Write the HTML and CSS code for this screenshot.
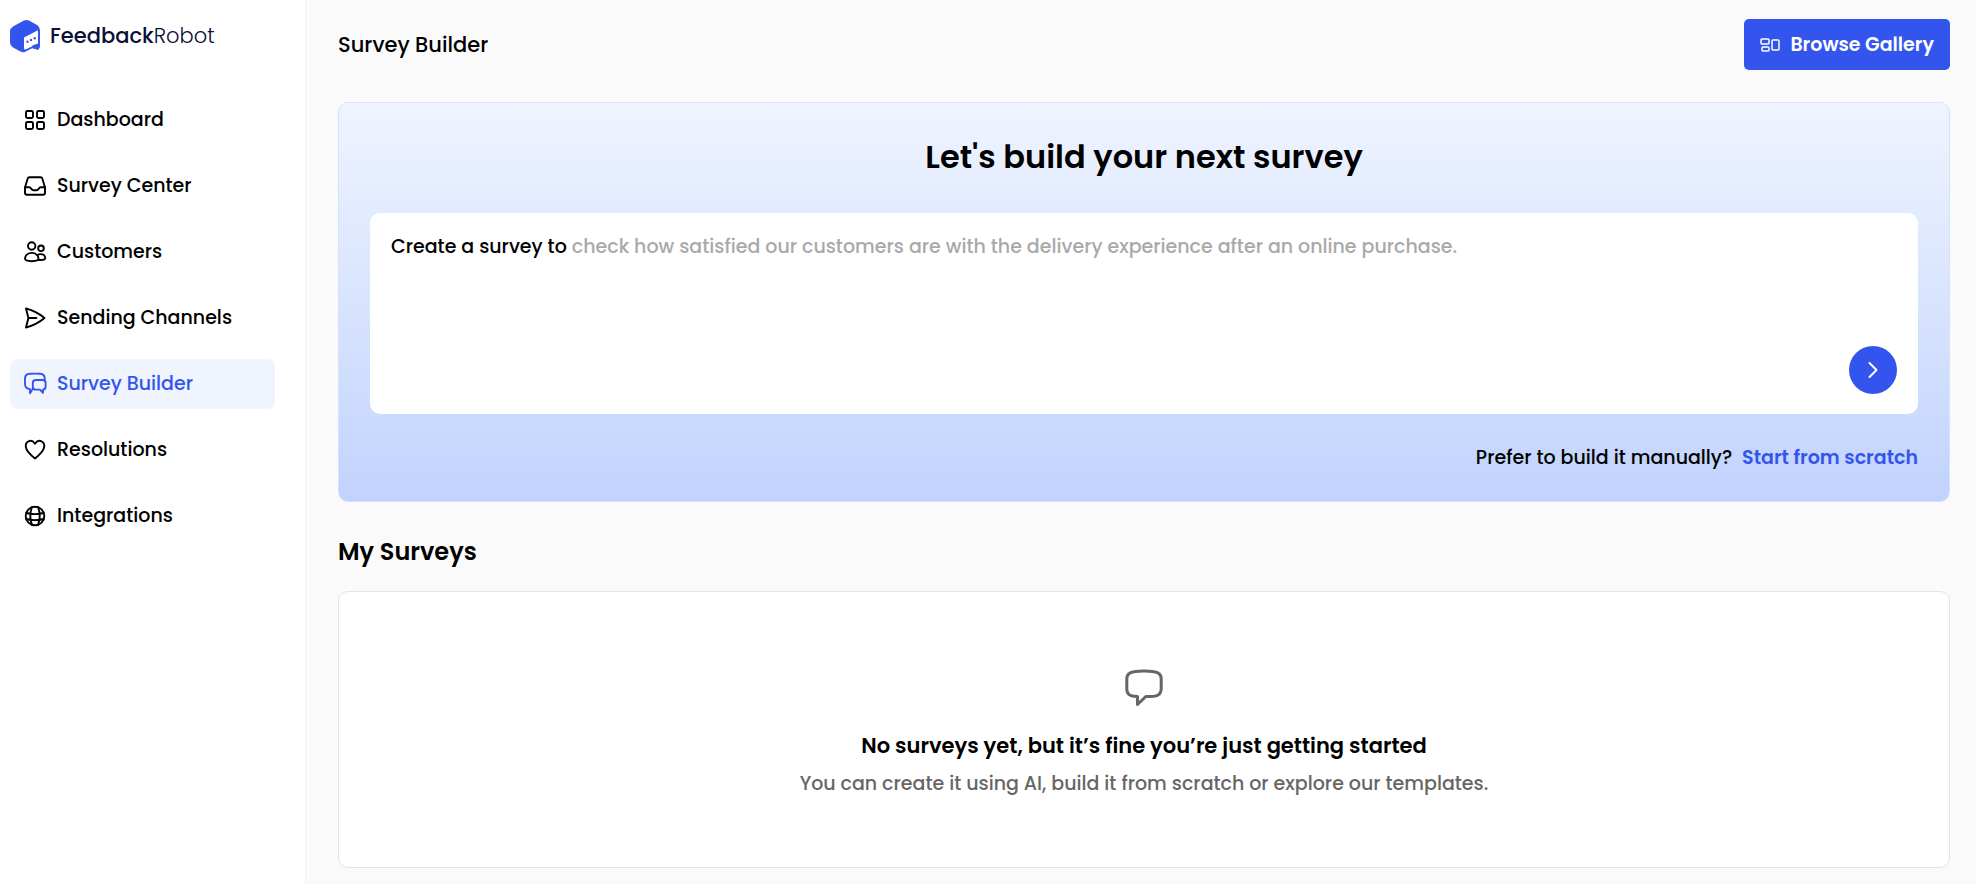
FILE: index.html
```html
<!DOCTYPE html>
<html lang="en">
<head>
    <meta charset="UTF-8">
    <meta name="viewport" content="width=device-width, initial-scale=1.0">
    <title>Survey Builder - FeedbackRobot</title>
    <link rel="stylesheet" href="styles.css">
</head>
<body>
    <aside class="sidebar">
        <a href="#" class="logo">
            <svg width="32" height="34" viewBox="1 0 32 34">
                <path d="M14.500 1.800a6 6 0 0 1 6 0l7.500 4.300a6 6 0 0 1 3 5.100V28l-1.800 3-6-1.800-7 3.600a5 5 0 0 1-4.700-.2L4 28.600a6 6 0 0 1-3-5.100V12.500a6 6 0 0 1 3-5.100z" fill="#3355ee"/>
                <path d="M15 18.500L28 11.700q1-.5 1 .7v11.200q0 1-1 1.500L17 30.200q-2 1-2-1z" fill="#fff"/>
                <path d="M23 26.500l5-1.600v5.100z" fill="#3355ee"/>
                <g fill="#3355ee"><circle cx="18.500" cy="22.700" r="1.200"/><circle cx="22" cy="21" r="1.200"/><circle cx="25.700" cy="19.200" r="1.200"/></g>
            </svg>
            <span class="logo-text"><b>Feedback</b>Robot</span>
        </a>
        <nav>
            <ul>
                <li><a href="#">
                    <svg class="icon" viewBox="0 0 24 24"><rect x="3" y="3" width="7" height="7" rx="1.500"/><rect x="14" y="3" width="7" height="7" rx="1.500"/><rect x="3" y="14" width="7" height="7" rx="1.500"/><rect x="14" y="14" width="7" height="7" rx="1.500"/></svg>
                    Dashboard</a></li>
                <li><a href="#">
                    <svg class="icon" viewBox="0 0 24 24"><path d="M6.500 3.300h11a2 2 0 0 1 1.900 1.500L22 13.500v5.200a2 2 0 0 1-2 2H4a2 2 0 0 1-2-2v-5.200l2.600-8.700a2 2 0 0 1 1.900-1.500z"/><path d="M2 13.300h4.300c2 0 1.900 3 4.200 3h3c2.300 0 2.200-3 4.200-3H22"/></svg>
                    Survey Center</a></li>
                <li><a href="#">
                    <svg class="icon" viewBox="0 0 24 24"><circle cx="8.700" cy="6" r="3.700"/><circle cx="18" cy="8.300" r="2.800"/><path d="M8.800 12.900c-4 0-6.800 2.700-6.800 5.700 0 1.600 2.500 2.600 6.800 2.600s6.700-1 6.700-2.600c0-3-2.700-5.700-6.700-5.700z"/><path d="M14.200 15.200c.9-.7 2.200-1.100 3.500-1.100 2.700 0 4.500 1.800 4.500 3.900 0 1.200-1.700 2-4.500 2h-2.500"/></svg>
                    Customers</a></li>
                <li><a href="#">
                    <svg class="icon" viewBox="0 0 24 24"><path d="M3 2.500C9.500 4.200 16 7.300 21.500 12 16 16.700 9.500 19.800 3 21.500L5.400 12zM5.400 12h8"/></svg>
                    Sending Channels</a></li>
                <li><a href="#" class="active">
                    <svg class="icon" viewBox="0 0 24 24"><path d="M9.800 16.700L7 21.300v-4.200c-3.500-.3-5-1.700-5-5V6.500C2 3 3.700 2 7 1.800c3.300-.2 6.700-.2 10 0 3.300.2 4.700 1.400 4.700 4.700v1.600"/><path d="M13 8h6.300c2.300 0 3.300 1 3.300 3v3.400c0 2-1 3-2.600 3.200v3.200l-3-3.200h-4c-2.200 0-3.200-1-3.200-3.200V11c0-2 1-3 3.200-3z"/></svg>
                    Survey Builder</a></li>
                <li><a href="#">
                    <svg class="icon" viewBox="0 0 24 24"><path d="M12 5.700C10 2.900 7.300 2.300 5.200 3.500 3 4.700 2.400 7.500 3.100 10c1.200 4.300 6 8.200 8.900 10.500 2.900-2.300 7.700-6.200 8.900-10.500.7-2.500.1-5.300-2.100-6.500-2.100-1.200-4.800-.6-6.800 2.200z"/></svg>
                    Resolutions</a></li>
                <li><a href="#">
                    <svg class="icon" viewBox="0 0 24 24"><circle cx="12" cy="12" r="9.300"/><path d="M9 3c-2.300 6-2.300 12 0 18M15 3c2.300 6 2.300 12 0 18M3.300 9c6 1.600 11.400 1.600 17.400 0M3.300 15c6 1.600 11.400 1.600 17.400 0"/></svg>
                    Integrations</a></li>
            </ul>
        </nav>
    </aside>
    <main>
        <header>
            <h1>Survey Builder</h1>
            <button type="button" class="browse">
                <svg width="20" height="16" viewBox="0 0 20 16"><rect x="1" y="2" width="8" height="5" rx="1"/><rect x="2" y="10" width="7" height="4" rx="1"/><rect x="12" y="3" width="7" height="10" rx="1"/></svg>
                Browse Gallery
            </button>
        </header>
        <section class="builder">
            <h2>Let's build your next survey</h2>
            <form class="prompt">
                <label for="survey-prompt">Create a survey to</label>
                <textarea id="survey-prompt" placeholder="check how satisfied our customers are with the delivery experience after an online purchase."></textarea>
                <button type="button" class="next" aria-label="Next">
                    <svg width="24" height="24" viewBox="0 0 24 24"><path d="M8.500 5l7 7-7 7"/></svg>
                </button>
            </form>
            <p class="manual">Prefer to build it manually? <a href="#">Start from scratch</a></p>
        </section>
        <h3>My Surveys</h3>
        <section class="empty">
            <svg width="48" height="48" viewBox="0 0 48 48"><path d="M17.500 34.500c-3 0-5-.2-6.500-.8-2.900-1.100-4.200-3.200-4.200-6.700V17c0-4.500 2.200-6.700 7-7.300 6.800-.8 13.600-.8 20.400 0 4.800.6 7 2.800 7 7.300v10c0 4.500-2.200 6.700-7 7.200-3 .2-6 .3-8.400.3l-8.300 8z"/></svg>
            <h4>No surveys yet, but it’s fine you’re just getting started</h4>
            <p>You can create it using AI, build it from scratch or explore our templates.</p>
        </section>
    </main>
</body>
</html>
```
FILE: styles.css
```css
* {
    box-sizing: border-box;
}

body {
    margin: 0;
    min-height: 100vh;
    display: flex;
    background-color: #fafafa;
    color: #000000;
    font-family: 'Poppins', 'Inter', sans-serif;
    font-size: 19px;
    font-weight: 500;
    line-height: 28px;
}

h1, h2, h3, h4, p, ul {
    margin: 0;
    padding: 0;
}

a {
    color: inherit;
    text-decoration: none;
}

svg {
    flex: none;
    fill: none;
    stroke-linecap: round;
    stroke-linejoin: round;
}

button, textarea {
    font: inherit;
    border: none;
}

button {
    display: flex;
    align-items: center;
    justify-content: center;
    background-color: #3355ee;
    color: #ffffff;
    cursor: pointer;
}

button svg {
    stroke: #ffffff;
    stroke-width: 1.5;
}

/* Sidebar */
.sidebar {
    flex: none;
    width: 306px;
    padding: 18px 30px 0 10px;
    background-color: #ffffff;
    border-right: 1px solid #f3f3f3;
}

.logo {
    display: flex;
    align-items: center;
    gap: 8px;
    height: 36px;
    margin-bottom: 41px;
}

.logo-text {
    color: #0a1038;
    font-size: 21px;
    font-weight: 300;
}

.logo-text b {
    font-weight: 500;
}

nav ul {
    list-style: none;
    display: flex;
    flex-direction: column;
    gap: 16px;
}

nav a {
    display: flex;
    align-items: center;
    gap: 10px;
    height: 50px;
    padding: 0 13px;
    border-radius: 8px;
}

nav a.active {
    background-color: #eff4ff;
    color: #3355ee;
}

.icon {
    width: 24px;
    height: 24px;
    stroke: currentColor;
    stroke-width: 1.9;
}

/* Main area */
main {
    flex: 1;
    display: flex;
    flex-direction: column;
    padding: 19px 26px 16px 32px;
}

header {
    display: flex;
    align-items: center;
    justify-content: space-between;
    margin-bottom: 32px;
}

h1 {
    font-size: 21px;
    font-weight: 500;
}

.browse {
    gap: 10px;
    height: 51px;
    padding: 0 16px;
    border-radius: 5px;
    font-weight: 600;
}

.builder {
    padding: 32px 31px 29px;
    border: 1px solid #d5e2fe;
    border-radius: 10px;
    background: linear-gradient(#eff4ff, #c1d3fd);
}

h2 {
    margin-bottom: 34px;
    font-size: 32px;
    font-weight: 600;
    line-height: 44px;
    text-align: center;
}

.prompt {
    display: flex;
    gap: 5px;
    height: 201px;
    padding: 20px 21px;
    border-radius: 10px;
    background-color: #ffffff;
}

.prompt textarea {
    flex: 1;
    padding: 0;
    background: none;
    outline: none;
    resize: none;
}

.prompt textarea::placeholder {
    color: #a9a9a9;
}

.next {
    align-self: flex-end;
    width: 48px;
    height: 48px;
    padding: 0;
    border-radius: 50%;
}

.next svg {
    stroke-width: 2;
}

.manual {
    margin-top: 30px;
    text-align: right;
}

.manual a {
    margin-left: 5px;
    color: #3355ee;
    font-weight: 600;
}

h3 {
    margin: 34px 0 23px;
    font-size: 24px;
    font-weight: 600;
    line-height: 32px;
}

.empty {
    flex: 1;
    display: flex;
    flex-direction: column;
    align-items: center;
    justify-content: center;
    border: 1px solid #e4e4e4;
    border-radius: 10px;
    background-color: #ffffff;
}

.empty svg {
    margin-bottom: 22px;
    stroke: #666666;
    stroke-width: 3;
}

h4 {
    margin-bottom: 10px;
    font-size: 21px;
    font-weight: 600;
}

.empty p {
    color: #666666;
}
```
